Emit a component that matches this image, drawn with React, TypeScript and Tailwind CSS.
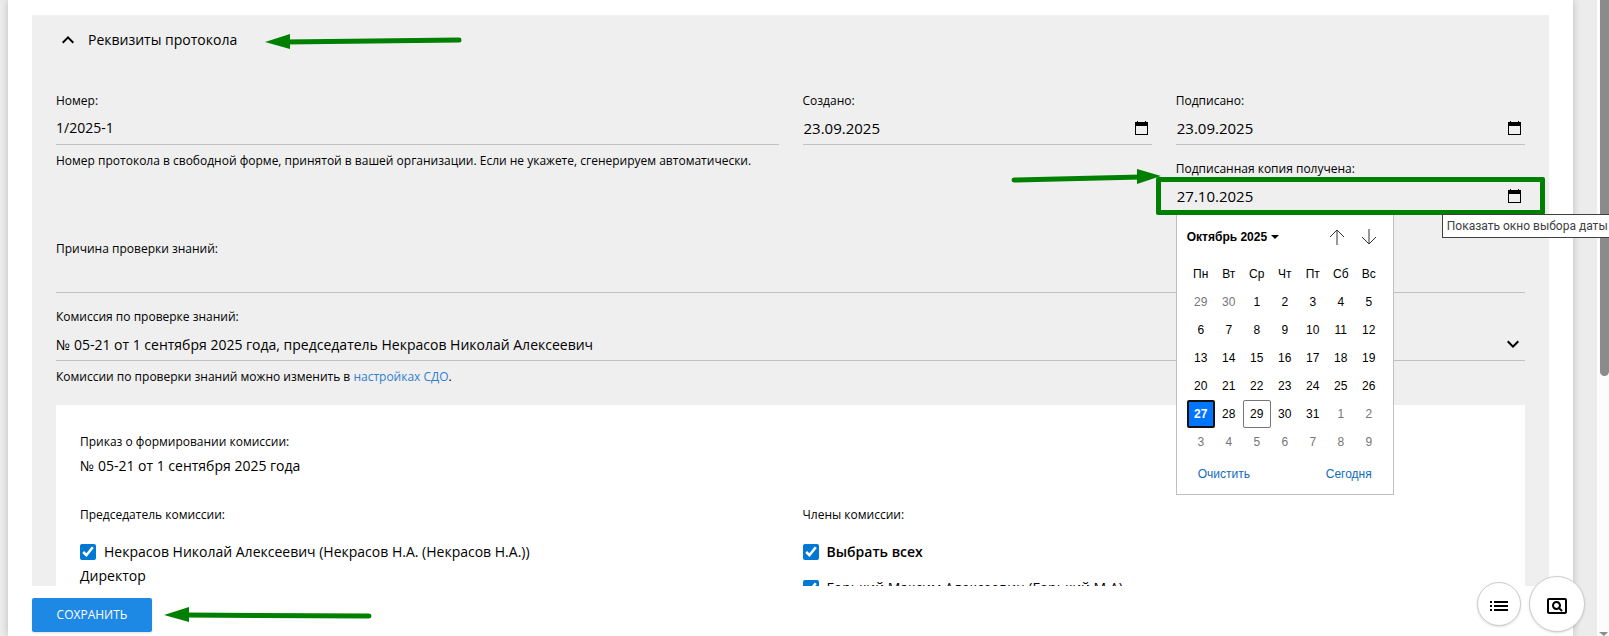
import type { ReactNode } from "react";
import {
  MdExpandLess,
  MdExpandMore,
  MdList,
  MdOutlinePageview,
} from "react-icons/md";

const weekDays = ["Пн", "Вт", "Ср", "Чт", "Пт", "Сб", "Вс"];

const weeks = [
  [29, 30, 1, 2, 3, 4, 5],
  [6, 7, 8, 9, 10, 11, 12],
  [13, 14, 15, 16, 17, 18, 19],
  [20, 21, 22, 23, 24, 25, 26],
  [27, 28, 29, 30, 31, 1, 2],
  [3, 4, 5, 6, 7, 8, 9],
];

const dayClass = (week: number, day: number) => {
  const outside = (week === 0 && day > 20) || (week > 3 && day < 20);
  if (outside) return "text-[#767676]";
  if (week === 4 && day === 27)
    return "bg-[#0075ff] text-white font-bold border-2 border-[#101010] rounded-xs";
  if (week === 4 && day === 29) return "border border-[#767676] rounded-xs";
  return "text-black";
};

const CalendarIcon = () => (
  <svg width="13" height="14" viewBox="0 0 13 14" aria-hidden="true">
    <path d="M2 0h1v1h7V0h1v1h2v13H0V1h2z M1 5v8h11V5z" fillRule="evenodd" />
  </svg>
);

/* green pointer, head on the left */
const ArrowLeft = ({ length, drop }: { length: number; drop: number }) => (
  <svg width="210" height="16" viewBox="0 0 210 16" className="shrink-0" aria-hidden="true">
    <path d={`M20 8L${length - 3} ${8 + drop}`} stroke="#008000" strokeWidth="5" strokeLinecap="round" />
    <path d="M0 8L25 0V15Z" fill="#008000" />
  </svg>
);

const Field = ({ id, label, children }: { id: string; label: string; children: ReactNode }) => (
  <div>
    <label htmlFor={id} className="block text-xs leading-5">
      {label}
    </label>
    <div className="flex h-[34px] items-center border-b border-[#c0c0c0]">
      {children}
    </div>
  </div>
);

const DateField = ({ id, label, value }: { id: string; label: string; value: string }) => (
  <Field id={id} label={label}>
    <input
      id={id}
      defaultValue={value}
      className="h-full min-w-0 flex-1 bg-transparent px-px text-[15px] outline-none"
    />
    <button type="button" aria-label="Показать окно выбора даты" className="pr-1">
      <CalendarIcon />
    </button>
  </Field>
);

const DatePicker = () => (
  <div className="absolute left-0 top-full w-[218px] border border-[#bfbfbf] bg-white px-[10px] font-['Liberation_Sans',sans-serif] text-xs text-black">
    <div className="flex h-[46px] items-center">
      <button type="button" className="flex flex-1 items-center gap-1 font-bold">
        Октябрь 2025
        <svg width="8" height="4" viewBox="0 0 8 4" aria-hidden="true">
          <path d="M0 0h8L4 4z" />
        </svg>
      </button>
      <button type="button" aria-label="Предыдущий месяц" className="flex w-8 justify-center">
        <svg width="16" height="16" viewBox="0 0 16 16" fill="none" stroke="#333" aria-hidden="true">
          <path d="M8 16V1M1 8l7-7 7 7" />
        </svg>
      </button>
      <button type="button" aria-label="Следующий месяц" className="-mr-0.5 flex w-8 justify-center">
        <svg width="16" height="16" viewBox="0 0 16 16" fill="none" stroke="#333" aria-hidden="true">
          <path d="M8 0v15M1 8l7 7 7-7" />
        </svg>
      </button>
    </div>
    <table className="border-collapse">
      <thead>
        <tr>
          {weekDays.map((name) => (
            <th key={name} className="h-7 w-7 p-0 font-normal">
              {name}
            </th>
          ))}
        </tr>
      </thead>
      <tbody>
        {weeks.map((week, i) => (
          <tr key={i}>
            {week.map((day) => (
              <td key={day} className="p-0">
                <button type="button" className={`block h-7 w-7 ${dayClass(i, day)}`}>
                  {day}
                </button>
              </td>
            ))}
          </tr>
        ))}
      </tbody>
    </table>
    <div className="flex h-[38px] items-center justify-between px-[11px] pb-0.5 text-[#0f6cbd]">
      <button type="button">Очистить</button>
      <button type="button">Сегодня</button>
    </div>
  </div>
);

const Check = ({ label, bold }: { label: string; bold?: boolean }) => (
  <label className={`flex h-6 items-center gap-2 text-sm ${bold ? "font-semibold" : ""}`}>
    <input type="checkbox" defaultChecked className="h-4 w-4 accent-[#0078d4]" />
    {label}
  </label>
);

const App = () => {
  return (
    <div className="relative flex h-screen overflow-hidden bg-[#ececec] font-['Open_Sans',sans-serif] text-black">
      <div className="ml-2 mr-6 flex min-w-0 flex-1 flex-col bg-white shadow-[0_0_8px_rgba(0,0,0,0.2)]">
        {/* scrolled part of the form */}
        <main className="min-h-0 flex-1 overflow-y-clip px-6 pt-[15px]">
          <section className="bg-[#efefef] px-6 pb-6">
            <div className="flex h-[50px] items-center">
              <button type="button" className="flex items-center gap-2 text-sm">
                <MdExpandLess size={24} />
                Реквизиты протокола
              </button>
              <div className="ml-7 pt-1">
                <ArrowLeft length={197} drop={-2} />
              </div>
            </div>

            <div className="mt-[26px] grid grid-cols-4 gap-6">
              <div className="col-span-2">
                <Field id="number" label="Номер:">
                  <input
                    id="number"
                    defaultValue="1/2025-1"
                    className="h-full w-full bg-transparent text-sm outline-none"
                  />
                </Field>
                <p className="mt-1.5 text-xs leading-5">
                  Номер протокола в свободной форме, принятой в вашей организации. Если не укажете, сгенерируем автоматически.
                </p>
              </div>
              <DateField id="created" label="Создано:" value="23.09.2025" />
              <div className="flex flex-col gap-[14px]">
                <DateField id="signed" label="Подписано:" value="23.09.2025" />
                <div className="relative z-10">
                  <DateField id="received" label="Подписанная копия получена:" value="27.10.2025" />
                  <DatePicker />
                  {/* highlight frame and its pointer */}
                  <div className="pointer-events-none absolute -left-5 -right-5 -bottom-0.5 top-[18px] rounded-xs border-[5px] border-[#008000]" />
                  <svg width="150" height="16" viewBox="0 0 150 16" className="absolute -left-[165px] top-[10px]" aria-hidden="true">
                    <path d="M3 11L130 8" stroke="#008000" strokeWidth="5" strokeLinecap="round" />
                    <path d="M150 7L126 0V15Z" fill="#008000" />
                  </svg>
                  <div role="tooltip" className="absolute -right-[88px] left-[266px] top-[55px] h-6 whitespace-nowrap border border-[#404040] bg-white px-1 font-[Roboto,sans-serif] text-xs leading-[22px] text-[#404040]">
                    Показать окно выбора даты
                  </div>
                </div>
              </div>
            </div>

            <div className="mt-[26px] flex flex-col gap-[14px]">
              <Field id="reason" label="Причина проверки знаний:">
                <input id="reason" className="h-full w-full bg-transparent text-sm outline-none" />
              </Field>
              <Field id="commission" label="Комиссия по проверке знаний:">
                <select id="commission" className="h-full min-w-0 flex-1 appearance-none bg-transparent pt-0.5 text-sm outline-none">
                  <option>№ 05-21 от 1 сентября 2025 года, председатель Некрасов Николай Алексеевич</option>
                </select>
                <MdExpandMore size={24} className="pointer-events-none" />
              </Field>
            </div>
            <p className="mt-1.5 text-xs leading-5">
              Комиссии по проверки знаний можно изменить в{" "}
              <a href="#" className="text-[#2f80cf]">настройках СДО</a>.
            </p>

            <div className="mt-[18px] bg-white px-6 pt-[25px] pb-6">
              <p className="text-xs leading-6">Приказ о формировании комиссии:</p>
              <p className="text-sm leading-6">№ 05-21 от 1 сентября 2025 года</p>
              <div className="mt-[25px] grid grid-cols-2 gap-6">
                <div>
                  <p className="text-xs leading-6">Председатель комиссии:</p>
                  <div className="mt-[13px]">
                    <Check label="Некрасов Николай Алексеевич (Некрасов Н.А. (Некрасов Н.А.))" />
                    <p className="text-sm leading-6">Директор</p>
                  </div>
                </div>
                <div>
                  <p className="text-xs leading-6">Члены комиссии:</p>
                  <div className="mt-[13px] flex flex-col gap-3">
                    <Check label="Выбрать всех" bold />
                    <Check label="Горький Максим Алексеевич (Горький М.А)" />
                  </div>
                </div>
              </div>
            </div>
          </section>
        </main>

        <footer className="flex h-[50px] items-center gap-3 px-6 pt-3 pb-1">
          <button
            type="button"
            className="h-[34px] w-[120px] shrink-0 rounded-xs bg-[#1e88e5] text-xs text-white shadow-sm"
          >
            СОХРАНИТЬ
          </button>
          <ArrowLeft length={208} drop={1} />
        </footer>
      </div>

      {/* scrollbar */}
      <div className="flex w-3 flex-col items-end justify-between bg-[#fcfcfc]">
        <div className="h-[376px] w-[9px] rounded-b-full bg-[#8b8b8b]" />
        <svg width="10" height="4" viewBox="0 0 10 4" aria-hidden="true">
          <path d="M0 0h9L5 4z" fill="#8b8b8b" />
        </svg>
      </div>

      {/* floating actions */}
      <div className="absolute bottom-1 right-6 z-20 flex items-center gap-2">
        <button
          type="button"
          aria-label="Список"
          className="flex h-11 w-11 items-center justify-center rounded-full border border-[#ccc] bg-white pt-1 shadow-sm"
        >
          <MdList size={24} />
        </button>
        <button
          type="button"
          aria-label="Поиск"
          className="flex h-14 w-14 items-center justify-center rounded-full border border-[#ccc] bg-white pt-1 shadow-sm"
        >
          <MdOutlinePageview size={24} />
        </button>
      </div>
    </div>
  );
};

export default App;
